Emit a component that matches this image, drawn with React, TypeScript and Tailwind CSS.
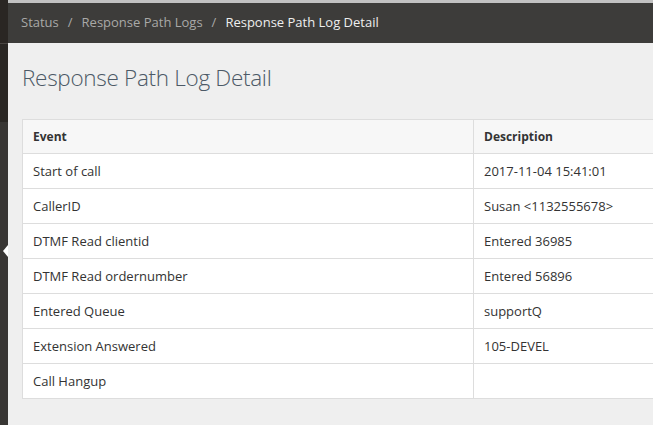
import React from "react"

const rows: [string, string][] = [
  ["Start of call", "2017-11-04 15:41:01"],
  ["CallerID", "Susan <1132555678>"],
  ["DTMF Read clientid", "Entered 36985"],
  ["DTMF Read ordernumber", "Entered 56896"],
  ["Entered Queue", "supportQ"],
  ["Extension Answered", "105-DEVEL"],
  ["Call Hangup", ""],
]

export default function App() {
  return (
    <div
      className="flex h-[425px] w-[653px] overflow-hidden bg-[#efefef]"
      style={{ fontFamily: '"Open Sans", "Liberation Sans", sans-serif' }}
    >
      {/* Sidebar strip */}
      <div className="relative flex w-[8px] shrink-0 flex-col">
        <div className="h-[43px] bg-[#2a2623]" />
        <div className="h-px bg-[#4a4643]" />
        <div className="h-[78px] bg-[#2a2724]" />
        <div className="grow bg-[#383634]" />
        <div className="absolute right-0 top-[245px] h-0 w-0 border-y-[6px] border-r-[5px] border-y-transparent border-r-white" />
      </div>

      {/* Main */}
      <div className="flex min-w-0 grow flex-col">
        <div className="h-[3px] bg-[#c2c2c2]" />
        <nav className="flex h-[40px] items-center gap-[9px] bg-[#3d3c3a] pl-[13px] text-[13px]">
          <span className="text-[#a9a9a7]">Status</span>
          <span className="text-[#a9a9a7]">/</span>
          <span className="text-[#a9a9a7]">Response Path Logs</span>
          <span className="text-[#a9a9a7]">/</span>
          <span className="text-[#eeeeee]">Response Path Log Detail</span>
        </nav>

        <div className="pl-[14px]">
          <h1 className="mt-[18px] text-[22.5px] leading-[34px] font-light tracking-[-0.3px] text-[#4c5966]">
            Response Path Log Detail
          </h1>

          <table className="mt-[24px] w-[900px] border-collapse border border-[#dddddd] bg-white text-[13px] text-[#333333]">
            <thead>
              <tr className="h-[34px] bg-[#f7f7f7]">
                <th className="w-[451px] border border-[#dddddd] pl-[10px] text-left text-[12px] font-bold">
                  Event
                </th>
                <th className="border border-[#dddddd] pl-[10px] text-left text-[12px] font-bold">
                  Description
                </th>
              </tr>
            </thead>
            <tbody>
              {rows.map(([event, desc]) => (
                <tr key={event} className="h-[35px]">
                  <td className="border border-[#dddddd] pl-[10px] pt-[2px]">{event}</td>
                  <td className="border border-[#dddddd] pl-[10px] pt-[2px]">{desc}</td>
                </tr>
              ))}
            </tbody>
          </table>
        </div>
      </div>
    </div>
  )
}
